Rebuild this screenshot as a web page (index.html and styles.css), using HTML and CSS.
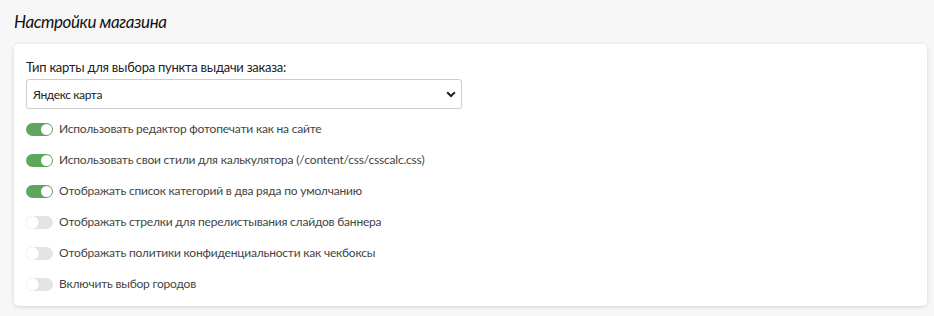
FILE: index.html
```html
<!DOCTYPE html>
<html lang="ru">
<head>
    <meta charset="UTF-8">
    <title>Настройки магазина</title>
    <link rel="stylesheet" href="styles.css">
</head>
<body>
    <div class="page">
        <h1 class="page-title">Настройки магазина</h1>
        <div class="card">
            <label class="field-label" for="map_type">Тип карты для выбора пункта выдачи заказа:</label>
            <div class="select-wrap">
                <select id="map_type" class="select">
                    <option>Яндекс карта</option>
                    <option>Google карта</option>
                </select>
                <svg class="select-arrow" width="10" height="7" viewBox="0 0 10 7">
                    <path d="M1.2 1.3 L5 5 L8.8 1.3" fill="none" stroke="#222" stroke-width="2"/>
                </svg>
            </div>

            <div class="switches">
                <label class="switch-row">
                    <input type="checkbox" class="switch" checked>
                    <span>Использовать редактор фотопечати как на сайте</span>
                </label>
                <label class="switch-row">
                    <input type="checkbox" class="switch" checked>
                    <span>Использовать свои стили для калькулятора (/content/css/csscalc.css)</span>
                </label>
                <label class="switch-row">
                    <input type="checkbox" class="switch" checked>
                    <span>Отображать список категорий в два ряда по умолчанию</span>
                </label>
                <label class="switch-row">
                    <input type="checkbox" class="switch">
                    <span>Отображать стрелки для перелистывания слайдов баннера</span>
                </label>
                <label class="switch-row">
                    <input type="checkbox" class="switch">
                    <span>Отображать политики конфиденциальности как чекбоксы</span>
                </label>
                <label class="switch-row">
                    <input type="checkbox" class="switch">
                    <span>Включить выбор городов</span>
                </label>
            </div>
        </div>
    </div>
</body>
</html>
```

FILE: styles.css
```css
body {
    margin: 0;
    background-color: #f7f7f7;
    color: #222;
    font-family: Lato, "Noto Sans", sans-serif;
    font-size: 13px;
}
.page {
    padding: 8px 7px 9px 14px;
}
.page-title {
    margin: 0;
    font-size: 17px;
    font-weight: normal;
    font-style: italic;
    letter-spacing: -0.4px;
    line-height: 28px;
    color: #111;
}
.card {
    margin-top: 8px;
    padding: 14px 12px 13px 12px;
    background-color: #fff;
    border-radius: 5px;
    box-shadow: 0 1px 4px rgba(0, 0, 0, 0.15);
}
.field-label {
    display: block;
    line-height: 18px;
    letter-spacing: -0.25px;
}
.select-wrap {
    position: relative;
    width: 436px;
    margin-top: 3px;
}
.select {
    display: block;
    width: 100%;
    height: 30px;
    padding: 0 24px 0 6px;
    border: 1px solid #ccc;
    border-radius: 3px;
    background-color: #fff;
    color: #222;
    font-family: inherit;
    font-size: 12px;
    letter-spacing: -0.4px;
    appearance: none;
    -webkit-appearance: none;
}
.select-arrow {
    position: absolute;
    right: 6px;
    top: 12px;
    pointer-events: none;
}
.switches {
    display: flex;
    flex-direction: column;
    gap: 13px;
    margin-top: 11px;
}
.switch-row {
    display: flex;
    align-items: center;
    gap: 6px;
    font-size: 12px;
    letter-spacing: -0.2px;
    line-height: 18px;
    color: #444;
}
.switch {
    appearance: none;
    -webkit-appearance: none;
    margin: 0;
    width: 27px;
    height: 13px;
    border-radius: 7px;
    background-color: #e4e4e4;
    position: relative;
    flex-shrink: 0;
}
.switch::before {
    content: "";
    position: absolute;
    left: 0;
    top: 0;
    width: 13px;
    height: 13px;
    border-radius: 50%;
    background-color: #fff;
    box-shadow: 0 0 1px rgba(0, 0, 0, 0.15);
}
.switch:checked {
    background-color: #5ea55e;
}
.switch:checked::before {
    left: auto;
    right: 1px;
    top: 1px;
    width: 11px;
    height: 11px;
    box-shadow: none;
}
```
